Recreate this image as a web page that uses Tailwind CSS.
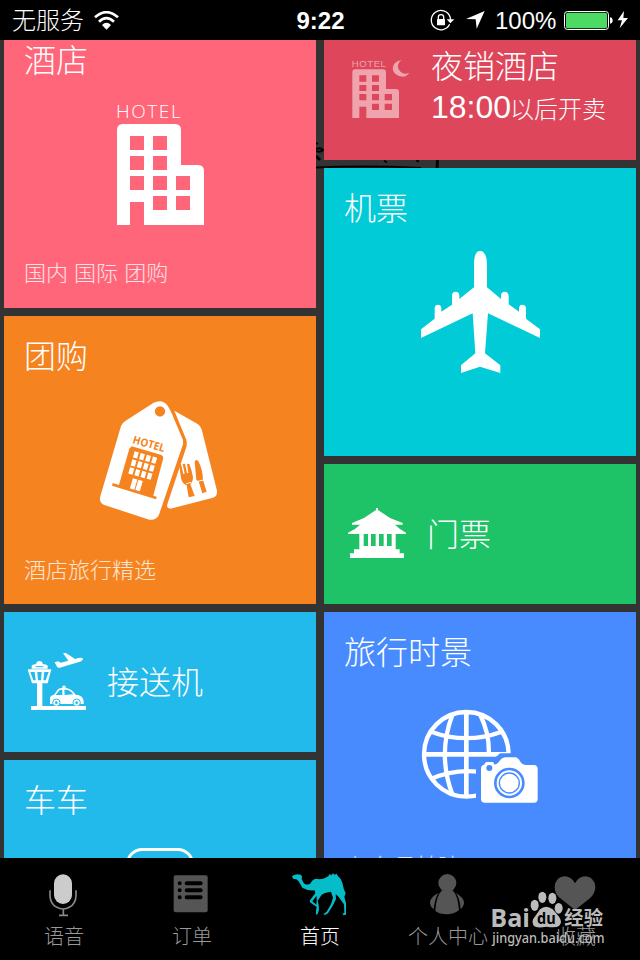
<!DOCTYPE html>
<html lang="zh-CN">
<head>
    <meta charset="UTF-8">
    <meta name="viewport" content="width=device-width, initial-scale=1.0">
    <title>首页</title>
    <script src="https://cdn.jsdelivr.net/npm/@tailwindcss/browser@4"></script>
</head>
<body class="bg-black">
<div class="relative w-[640px] h-[960px] flex flex-col overflow-hidden bg-black text-white font-light font-['Liberation_Sans','Noto_Sans_CJK_SC',sans-serif]">

    <!-- Status bar -->
    <header class="h-10 shrink-0 grid grid-cols-[1fr_auto_1fr] items-center pl-3 pr-[11px]">
        <div class="flex items-center gap-[10px]">
            <span class="text-2xl leading-none pt-0.5">无服务</span>
            <svg class="w-[25px] h-[19px]" viewBox="0 0 75 57" fill="none" stroke="#fff" stroke-width="8">
                <path d="M3 19Q37-12 72 19"/>
                <path d="M15 32Q37 11 60 32"/>
                <path d="M24 42Q37 29 51 42L37.500 56Z" fill="#fff" stroke="none"/>
            </svg>
        </div>
        <span class="text-2xl leading-none font-bold pt-0.5">9:22</span>
        <div class="flex items-center justify-end">
            <svg class="w-[25px] h-[22px] mr-[11px]" viewBox="330 27 75 66">
                <path d="M389 73A29 29 0 1 1 390 50L392 60" fill="none" stroke="#fff" stroke-width="4"/>
                <path d="M380 58H403L391 70Z" fill="#fff"/>
                <rect x="351" y="57" width="24" height="19" rx="2" fill="#fff"/>
                <path d="M355 58V51Q355 44 363 44Q371 44 371 51V58" fill="none" stroke="#fff" stroke-width="4"/>
            </svg>
            <svg class="w-[19px] h-[18px] mr-[10px]" viewBox="438 36 57 54"><path d="M438 60L494 36L470 89L467 61Z" fill="#fff"/></svg>
            <span class="text-2xl leading-none w-[69px] pt-0.5">100%</span>
            <svg class="w-[50px] h-[19px] mr-[3px]" viewBox="732 33 150 57">
                <rect x="733.500" y="34.500" width="132" height="54" rx="9" fill="none" stroke="#fff" stroke-width="3"/>
                <rect x="738" y="38" width="123" height="47" rx="5" fill="#4cd964"/>
                <path d="M870 52Q878 53 878 61.500Q878 70 870 71Z" fill="#fff"/>
            </svg>
            <svg class="w-3 h-[18px]" viewBox="891 36 36 54"><path d="M912 36L893 64H906L899 88L924 57H910Z" fill="#fff"/></svg>
        </div>
    </header>

    <!-- Tile wall -->
    <main class="relative h-[818px] shrink-0 overflow-hidden bg-[#333] px-1 grid grid-cols-2 gap-2 items-start">
        <svg class="absolute left-[316px] top-[100px] w-[130px] h-[30px]" viewBox="0 0 130 30" fill="none" stroke="#050505">
            <path d="M0 9Q4 7 7 10Q4 13 0 11M0 3L2 4" stroke-width="2"/><path d="M0 16L4 20" stroke-width="3"/>
            <path d="M0 27.500Q50 25.500 105 28" stroke-width="2"/><path d="M121.500 19L121 30" stroke-width="3"/><path d="M68 20.500l3 2M100 20.500l3 1" stroke-width="2"/>
        </svg>

        <div class="relative flex flex-col gap-2">
            <section class="h-[268px] bg-[#ff667a] pl-5 pt-1">
                <h2 class="text-[32px] leading-[34px]">酒店</h2>
                <svg class="w-[90px] h-[123px] mt-[25px] ml-[92px]" viewBox="78 39 270 369">
                    <text x="78" y="84" font-size="57" textLength="194" font-family="Open Sans, sans-serif" font-weight="300" fill="#fff">HOTEL</text>
                    <path fill="#fff" fill-rule="evenodd" d="M81 405V120Q81 102 99 102H255Q273 102 273 120V225H324Q342 225 342 243V405H162V336H120V405Z M120 138V180H162V138Z M189 138V180H231V138Z M120 198V240H162V198Z M189 198V240H231V198Z M120 258V300H162V258Z M189 258V300H231V258Z M258 258V300H300V258Z M189 318V360H231V318Z M258 318V360H300V318Z"/>
                </svg>
                <p class="text-[22px] leading-6 mt-9 text-white/80">国内 国际 团购</p>
            </section>

            <section class="h-[288px] bg-[#f58320] pl-5 pt-6">
                <h2 class="text-[32px] leading-[34px]">团购</h2>
                <svg class="w-[119px] h-[121px] mt-[26px] ml-[75px]" viewBox="42 30 357 363">
                    <path fill="#fff" d="M268 62L338 102Q347 108 350 118L396 302Q398 318 384 323L262 355Q243 358 247 343L305 168Q307 157 303 147Z"/>
                    <path fill="#fff" d="M122 92L206 38Q231 26 247 46Q255 58 260 70L293 148Q296 157 293 166L222 374Q213 392 193 389L58 345Q41 337 46 319L108 108Q112 98 122 92Z"/>
                    <g fill="#f58320">
                        <circle cx="225" cy="64" r="15.500"/>
                        <text transform="translate(141 159) rotate(16)" font-size="33" textLength="99" lengthAdjust="spacingAndGlyphs" font-family="Open Sans, sans-serif" font-weight="700">HOTEL</text>
                        <path d="M140 169L227 194Q237 198 234 208L204 320L101 288L133 176Z"/>
                        <path d="M83 279L215 320L213 328L81 287Z"/>
                        <path d="M283 228Q279 222 288 222L295 252L299 251L293 222L300 221L306 250L310 249L306 221L313 222Q322 245 324 262Q324 276 316 282L329 318L311 322L305 286Q292 281 288 265Z"/>
                        <path d="M329 215Q333 205 340 214Q353 237 354 270L365 305L352 310L341 274L334 270Z"/>
                    </g>
                    <g fill="#f58320" stroke="#fff" stroke-width="3"><path d="M304 281L318 277M335 275L355 270"/></g>
                    <g fill="#fff" transform="translate(149 184) rotate(16)">
                        <path d="M0 0h13v19h-13zM19 0h13v19h-13zM38 0h13v19h-13zM57 0h13v19h-13zM0 25h13v19h-13zM19 25h13v19h-13zM38 25h13v19h-13zM57 25h13v19h-13zM0 50h13v19h-13zM19 50h13v19h-13zM38 50h13v19h-13zM57 50h13v19h-13zM17 79h14v32h-14zM34 79h14v32h-14z"/>
                    </g>
                </svg>
                <p class="text-[22px] leading-6 mt-[38px] text-white/80">酒店旅行精选</p>
            </section>

            <section class="h-[140px] bg-[#22b9eb] flex items-center pl-6">
                <svg class="w-[59px] h-[59px] mb-0.5" viewBox="54 36 177 177">
                    <path fill="#fff" d="M63 198H81V130H66L53 88H124L113 130H97V198H228V210H63Z"/>
                    <path fill="#22b9eb" d="M61 96H74L77 121H70ZM82 96H95L93 121H84ZM103 96H116L107 121H100Z"/>
                    <path fill="#fff" d="M65 86V77Q71 72 78 73Q80 63 88 63Q97 63 99 73Q107 72 113 77V86Z"/>
                    <path stroke="#22b9eb" stroke-width="3" d="M77 80H100"/>
                    <path fill="#fff" d="M134 67L144 64L153 68L175 62L159 40L168 39L195 57Q216 50 219 56Q219 62 207 66L154 82Q145 86 141 80Z"/>
                    <path fill="#fff" d="M120 192V174Q121 167 132 164L144 148Q148 144 157 144V139Q162 134 167 139V144Q183 145 197 164Q219 165 221 183V192Z"/>
                    <path fill="#22b9eb" d="M137 165L148 151Q150 149 157 149V165ZM163 149H169Q180 150 190 163L164 165Z"/>
                    <g fill="#fff" stroke="#22b9eb" stroke-width="3"><circle cx="139" cy="188" r="11"/><circle cx="200" cy="188" r="11"/></g>
                    <g fill="#22b9eb"><circle cx="139" cy="188" r="4"/><circle cx="200" cy="188" r="4"/></g>
                    <path fill="#fff" d="M63 198H228V210H63Z"/>
                </svg>
                <h2 class="text-[32px] leading-8 ml-5 mt-0.5">接送机</h2>
            </section>

            <section class="h-[140px] bg-[#22b9eb] pl-5 pt-6">
                <h2 class="text-[32px] leading-[34px]">车车</h2>
                <div class="ml-[102px] mt-[30px] w-[68px] h-[70px] rounded-[16px] border-[3px] border-white"></div>
            </section>
        </div>

        <div class="relative flex flex-col gap-2">
            <section class="h-[120px] bg-[#de475b] flex items-start pl-7 pt-[10px]">
                <svg class="w-[58px] h-[60px] mt-[9px]" viewBox="95 177 174 180">
                    <g fill="#fff" fill-opacity=".5">
                        <text x="94" y="201" font-size="29" textLength="103" font-family="Liberation Sans, sans-serif">HOTEL</text>
                        <path fill-rule="evenodd" d="M96 354V217Q96 208 105 208H188Q197 208 197 217V267H227Q236 267 236 276V354H138V320H117V354Z M117 226V245H138V226Z M155 226V245H176V226Z M117 255V273H138V255Z M155 255V273H176V255Z M117 282V301H138V282Z M155 282V301H176V282Z M193 282V301H215V282Z M155 311V330H176V311Z M193 311V330H215V311Z"/>
                        <path d="M243 180Q226 194 237 211Q247 226 267 219Q257 233 239 229Q218 223 217 205Q218 186 243 180Z"/>
                    </g>
                </svg>
                <div class="ml-[21px]">
                    <h2 class="text-[32px] leading-[34px]">夜销酒店</h2>
                    <p class="flex items-center mt-0.5 h-[42px]"><span class="text-[32px] leading-8">18:00</span><span class="text-2xl leading-6 mt-1.5 -ml-px">以后开卖</span></p>
                </div>
            </section>

            <section class="h-[288px] bg-[#02cbd8] pl-5 pt-6">
                <h2 class="text-[32px] leading-[34px]">机票</h2>
                <svg class="w-[121px] h-[124px] mt-6 ml-[76px]" viewBox="60 30 363 372">
                    <path fill="#fff" d="M240 33C226 33 222 52 222 75V142L178 177V166Q177 155 167 155Q156 155 156 168V194L124 215V204Q123 194 114 194Q105 194 104 204V236L63 268V294L218 220L226 340L183 376V399L240 380L301 399V376L255 340L264 220L420 294V268L378 236V204Q377 194 367 194Q358 194 357 204V215L326 193V168Q325 155 314 155Q304 155 303 166V177L261 142V75C261 52 255 33 240 33Z"/>
                </svg>
            </section>

            <section class="h-[140px] bg-[#1ec367] flex items-center pl-6">
                <svg class="w-[58px] h-[52px] mb-0.5" viewBox="54 51 174 156" fill="#fff">
                    <path d="M138 54H144V60L180 84L218 99V104H195Q210 119 228 128V132H54V128Q76 119 90 104H66V99L102 84L138 60Z"/>
                    <path fill-rule="evenodd" d="M88 132H197V178H209V190H222V204H60V190H72V178H88Z M101 132V168H114V132Z M123 132V168H137V132Z M147 132V168H161V132Z M171 132V168H185V132Z"/>
                </svg>
                <h2 class="text-[32px] leading-8 ml-[21px] mt-0.5">门票</h2>
            </section>

            <section class="h-[288px] bg-[#488bff] pl-5 pt-6">
                <h2 class="text-[32px] leading-[34px]">旅行时景</h2>
                <svg class="w-[118px] h-[95px] mt-[39px] ml-[77px]" viewBox="63 27 354 285">
                    <g fill="none" stroke="#fff" stroke-width="13">
                        <circle cx="199" cy="163" r="127"/>
                        <path d="M199 35V290M72 163H327" stroke-width="14"/>
                        <path d="M157 45Q112 163 157 283M241 45Q270 105 266 165M93 95Q199 134 305 95M93 237Q160 207 235 215"/>
                    </g>
                    <path fill="#488bff" d="M228 312V190Q232 179 243 173H282Q292 170 300 160H345V312Z"/>
                    <path fill="#fff" d="M243 206Q243 196 252 194L258 186H279L284 194Q292 193 298 184Q304 174 314 172H345Q355 173 360 184Q366 194 376 195H402Q413 196 413 207V297Q413 308 402 308H254Q243 308 243 297Z"/>
                    <circle cx="268" cy="204" r="9" fill="#488bff"/>
                    <g fill="none" stroke="#488bff"><circle cx="328" cy="249" r="42" stroke-width="8"/><circle cx="328" cy="249" r="30" stroke-width="4"/></g>
                </svg>
                <p class="text-[22px] leading-6 mt-[51px] text-white/80 whitespace-pre">人 鱼日转晴  9-21C</p>
            </section>
        </div>
    </main>

    <!-- Tab bar -->
    <nav class="h-[102px] shrink-0 grid grid-cols-5 text-center text-[20px] leading-6 text-[#999]">
        <a class="flex flex-col items-center pt-[15px]">
            <svg class="w-[30px] h-[44px] mr-0.5" viewBox="144 128 90 132">
                <rect x="162" y="132" width="54" height="89" rx="27" fill="#ccc"/>
                <path d="M150 180V196Q151 220 169 230Q190 242 209 230Q227 220 228 196V180M190 236V255M177 255H204" fill="none" stroke="#888" stroke-width="5"/>
            </svg>
            <span class="mt-2">语音</span>
        </a>
        <a class="flex flex-col items-center pt-[15px]">
            <svg class="w-[36px] h-[44px] mr-0.5" viewBox="520 128 108 132">
                <rect x="522" y="135" width="102" height="111" rx="6" fill="#555"/>
                <g stroke="#000" stroke-width="12" stroke-linecap="round"><path d="M540 159h.1M540 180h.1M540 201h.1M561 159H603M561 180H603M561 201H603"/></g>
            </svg>
            <span class="mt-2">订单</span>
        </a>
        <a class="flex flex-col items-center pt-[15px] text-white">
            <svg class="w-14 h-[44px]" viewBox="876 128 168 132">
                <path fill="#05bcc9" d="M876 138L882 134L892 132L902 133L906 138L905 146L911 158Q918 166 930 160L938 150Q948 143 958 147L970 145L985 138L989 131L994 135L999 129L1004 133L1010 130L1013 136Q1025 146 1027 157L1032 178L1037 188L1033 200L1038 218V253L1030 255L1028 250L1033 247L1032 222L1016 200L1007 191L1008 206L999 225L984 249L975 254L970 252L980 244L993 222L999 202L993 184L975 188L965 193L953 211L956 224L957 238L953 251L948 253L948 241L950 230L930 216L929 211L940 196L946 189L944 180Q924 182 907 172L896 153L889 147L879 145ZM950 196L937 213L949 223L950 211Z"/>
            </svg>
            <span class="mt-2">首页</span>
        </a>
        <a class="flex flex-col items-center pt-[15px]">
            <svg class="w-[36px] h-[44px] mr-0.5" viewBox="327 128 108 132" fill="#555">
                <circle cx="382" cy="158" r="27"/>
                <path d="M366 180H398Q414 197 417 239Q401 252 381 252Q360 252 346 242Q348 198 366 180ZM355 188Q345 204 341 236Q330 230 330 216Q331 200 355 188ZM408 188Q431 202 432 216Q432 229 422 236Q419 204 408 188Z"/>
            </svg>
            <span class="mt-2">个人中心</span>
        </a>
        <a class="flex flex-col items-center pt-[15px]">
            <svg class="w-[42px] h-[44px] mr-0.5" viewBox="703 128 126 132"><path fill="#555" d="M766 159Q755 138 734 138Q706 140 705 172Q706 193 724 205L766 239L809 205Q827 191 827 170Q825 141 798 138Q777 138 766 159Z"/></svg>
            <span class="mt-2">收藏</span>
        </a>
    </nav>

    <!-- Watermark -->
    <svg class="absolute left-[490px] top-[888px] w-[118px] h-[60px]" viewBox="510 174 354 180" fill="#bbb">
        <text x="511" y="290" font-size="74" textLength="119" lengthAdjust="spacingAndGlyphs" font-family="Open Sans, sans-serif" font-weight="700">Bai</text>
        <ellipse cx="644" cy="226" rx="12" ry="17"/><ellipse cx="667" cy="202" rx="12" ry="17"/><ellipse cx="697" cy="205" rx="12" ry="17"/><ellipse cx="716" cy="235" rx="12" ry="16"/>
        <path d="M660 238Q678 222 698 238L716 259Q729 276 717 288Q706 295 679 290Q650 296 641 287Q632 274 646 258Z"/>
        <text x="651" y="282" font-size="48" textLength="56" lengthAdjust="spacingAndGlyphs" font-family="Open Sans, sans-serif" font-weight="700" fill="#000">du</text>
        <text x="733" y="286" font-size="58" font-family="Noto Sans CJK SC, sans-serif" font-weight="700">经验</text>
        <text x="517" y="338" font-size="42" textLength="337" lengthAdjust="spacingAndGlyphs" font-family="Noto Sans, sans-serif" font-weight="500">jingyan.baidu.com</text>
    </svg>
</div>
</body>
</html>
